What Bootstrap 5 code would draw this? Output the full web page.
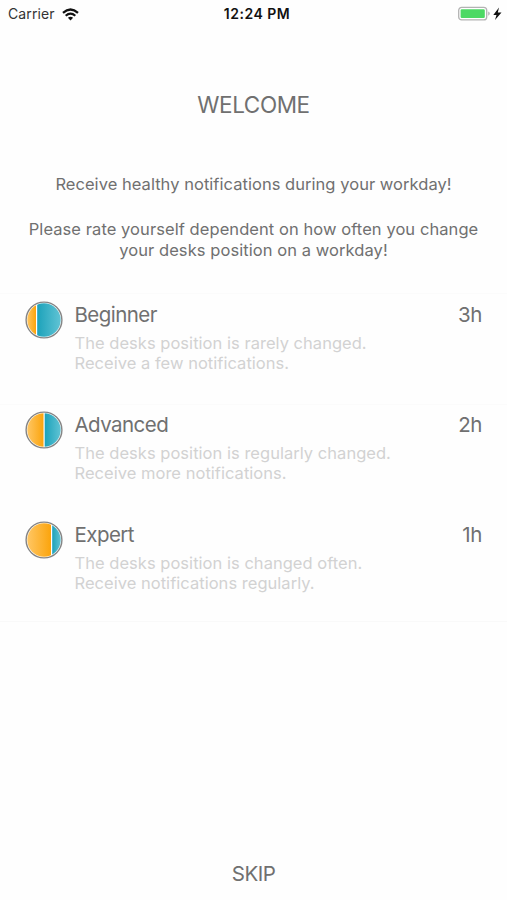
<!DOCTYPE html>
<html lang="en">
<head>
<meta charset="utf-8">
<meta name="viewport" content="width=device-width, initial-scale=1">
<title>Welcome</title>
<link href="https://cdn.jsdelivr.net/npm/bootstrap@5.3.0/dist/css/bootstrap.min.css" rel="stylesheet">
<style>
  body { font-family: Inter, "Liberation Sans", sans-serif; color: #707070; background: #fefefe; }
  .screen { height: 900px; overflow: hidden; }
  .status-bar { height: 28px; padding: 0 4px 0 8px; color: #111; font-size: 14px; line-height: 28px; }
  .carrier { color: #333; letter-spacing: .1px; }
  .wifi { margin-left: 7px; }
  .clock { font-weight: 600; font-size: 14px; letter-spacing: .5px; padding-left: 3px; }
  .page-title { font-size: 22.5px; line-height: 28px; margin-top: 62.5px; letter-spacing: -.4px; }
  .intro { font-size: 16.5px; line-height: 20.5px; letter-spacing: .04px; }
  .intro-first { margin-top: 55.5px; }
  .intro-second { margin-top: 24px; line-height: 21px; letter-spacing: .07px; }
  .levels { margin-top: 32px; border-top: 1px solid #fbfbfb; border-bottom: 1px solid #f9f9f9; }
  .level { height: 110px; padding: 8px 25px 0; }
  .level:last-child { height: 107px; }
  .level + .level { border-top: 1px solid #fbfbfb; padding-top: 7px; }
  .level:last-child { border-top-color: transparent; }
  .level-icon { width: 38px; height: 38px; margin: -1px 12px 0 -.5px; }
  .level-name { font-size: 20.5px; line-height: 26px; letter-spacing: -.55px; }
  .level-time { letter-spacing: -.4px; }
  .level-text { font-size: 16.5px; line-height: 20.5px; letter-spacing: .03px; color: #d2d2d2; margin-top: 5px; }
  .skip { font-size: 20.5px; line-height: 26px; color: #707070; margin-bottom: 13px; letter-spacing: -.5px; }
</style>
</head>
<body>
<svg width="0" height="0" class="position-absolute" aria-hidden="true">
  <defs>
    <linearGradient id="sun"><stop offset="0" stop-color="#ffc765"/><stop offset="1" stop-color="#fba40c"/></linearGradient>
    <linearGradient id="sea"><stop offset="0" stop-color="#1ca2ba"/><stop offset="1" stop-color="#62c4d5"/></linearGradient>
    <clipPath id="disc"><circle cx="19" cy="19" r="16.700"/></clipPath>
  </defs>
</svg>
<main class="screen d-flex flex-column">
  <header class="status-bar row g-0 align-items-center flex-shrink-0">
    <div class="col d-flex align-items-center">
      <span class="carrier">Carrier</span>
      <svg class="wifi" width="17" height="13" viewBox="0 0 17 13" fill="none" stroke="#111" stroke-width="2.2">
        <path d="M1 4.900Q8.500-1.900 16 4.900M3.700 7.700Q8.500 3.400 13.300 7.700"/>
        <path d="M5.900 9.700Q8.500 7.600 11.100 9.700L8.500 12.400Z" fill="#111" stroke="none"/>
      </svg>
    </div>
    <div class="col-auto clock">12:24 PM</div>
    <div class="col d-flex align-items-center justify-content-end">
      <svg width="46" height="16" viewBox="0 0 46 16">
        <rect x="1.700" y="1.300" width="28" height="12.600" rx="3" fill="#fff" stroke="#b3b3b3" stroke-width="1.300"/>
        <rect x="3.600" y="3.200" width="24.200" height="8.800" rx="1.200" fill="#4cd964"/>
        <path d="M31.200 5.500v4.200q1.600-.6 1.600-2.100t-1.600-2.100Z" fill="#b3b3b3"/>
        <path d="M42 1.500L36.300 8.900h3.200l-1.500 5.200L44.500 6.600h-3.700Z" fill="#111"/>
      </svg>
    </div>
  </header>

  <h1 class="page-title text-center fw-normal mb-0">WELCOME</h1>
  <p class="intro intro-first text-center mb-0">Receive healthy notifications during your workday!</p>
  <p class="intro intro-second text-center mb-0">Please rate yourself dependent on how often you change<br>your desks position on a workday!</p>

  <section class="levels">
    <div class="level d-flex align-items-start">
      <svg class="level-icon flex-shrink-0" viewBox="0 0 38 38">
        <circle cx="19" cy="19" r="17.900" fill="#fff" stroke="#858585" stroke-width="1.400"/>
        <g clip-path="url(#disc)"><rect x="2" y="2" width="9" height="34" fill="url(#sun)"/><rect x="12.200" y="2" width="24" height="34" fill="url(#sea)"/></g>
      </svg>
      <div class="flex-grow-1">
        <div class="level-name d-flex justify-content-between"><span>Beginner</span><span class="level-time">3h</span></div>
        <p class="level-text mb-0">The desks position is rarely changed.<br>Receive a few notifications.</p>
      </div>
    </div>
    <div class="level d-flex align-items-start">
      <svg class="level-icon flex-shrink-0" viewBox="0 0 38 38">
        <circle cx="19" cy="19" r="17.900" fill="#fff" stroke="#858585" stroke-width="1.400"/>
        <g clip-path="url(#disc)"><rect x="2" y="2" width="16.500" height="34" fill="url(#sun)"/><rect x="19.700" y="2" width="16.500" height="34" fill="url(#sea)"/></g>
      </svg>
      <div class="flex-grow-1">
        <div class="level-name d-flex justify-content-between"><span>Advanced</span><span class="level-time">2h</span></div>
        <p class="level-text mb-0">The desks position is regularly changed.<br>Receive more notifications.</p>
      </div>
    </div>
    <div class="level d-flex align-items-start">
      <svg class="level-icon flex-shrink-0" viewBox="0 0 38 38">
        <circle cx="19" cy="19" r="17.900" fill="#fff" stroke="#858585" stroke-width="1.400"/>
        <g clip-path="url(#disc)"><rect x="2" y="2" width="24" height="34" fill="url(#sun)"/><rect x="27.200" y="2" width="9" height="34" fill="url(#sea)"/></g>
      </svg>
      <div class="flex-grow-1">
        <div class="level-name d-flex justify-content-between"><span>Expert</span><span class="level-time">1h</span></div>
        <p class="level-text mb-0">The desks position is changed often.<br>Receive notifications regularly.</p>
      </div>
    </div>
  </section>

  <a href="#" class="skip mt-auto align-self-center text-decoration-none">SKIP</a>
</main>
<script src="https://cdn.jsdelivr.net/npm/bootstrap@5.3.0/dist/js/bootstrap.bundle.min.js"></script>
</body>
</html>
